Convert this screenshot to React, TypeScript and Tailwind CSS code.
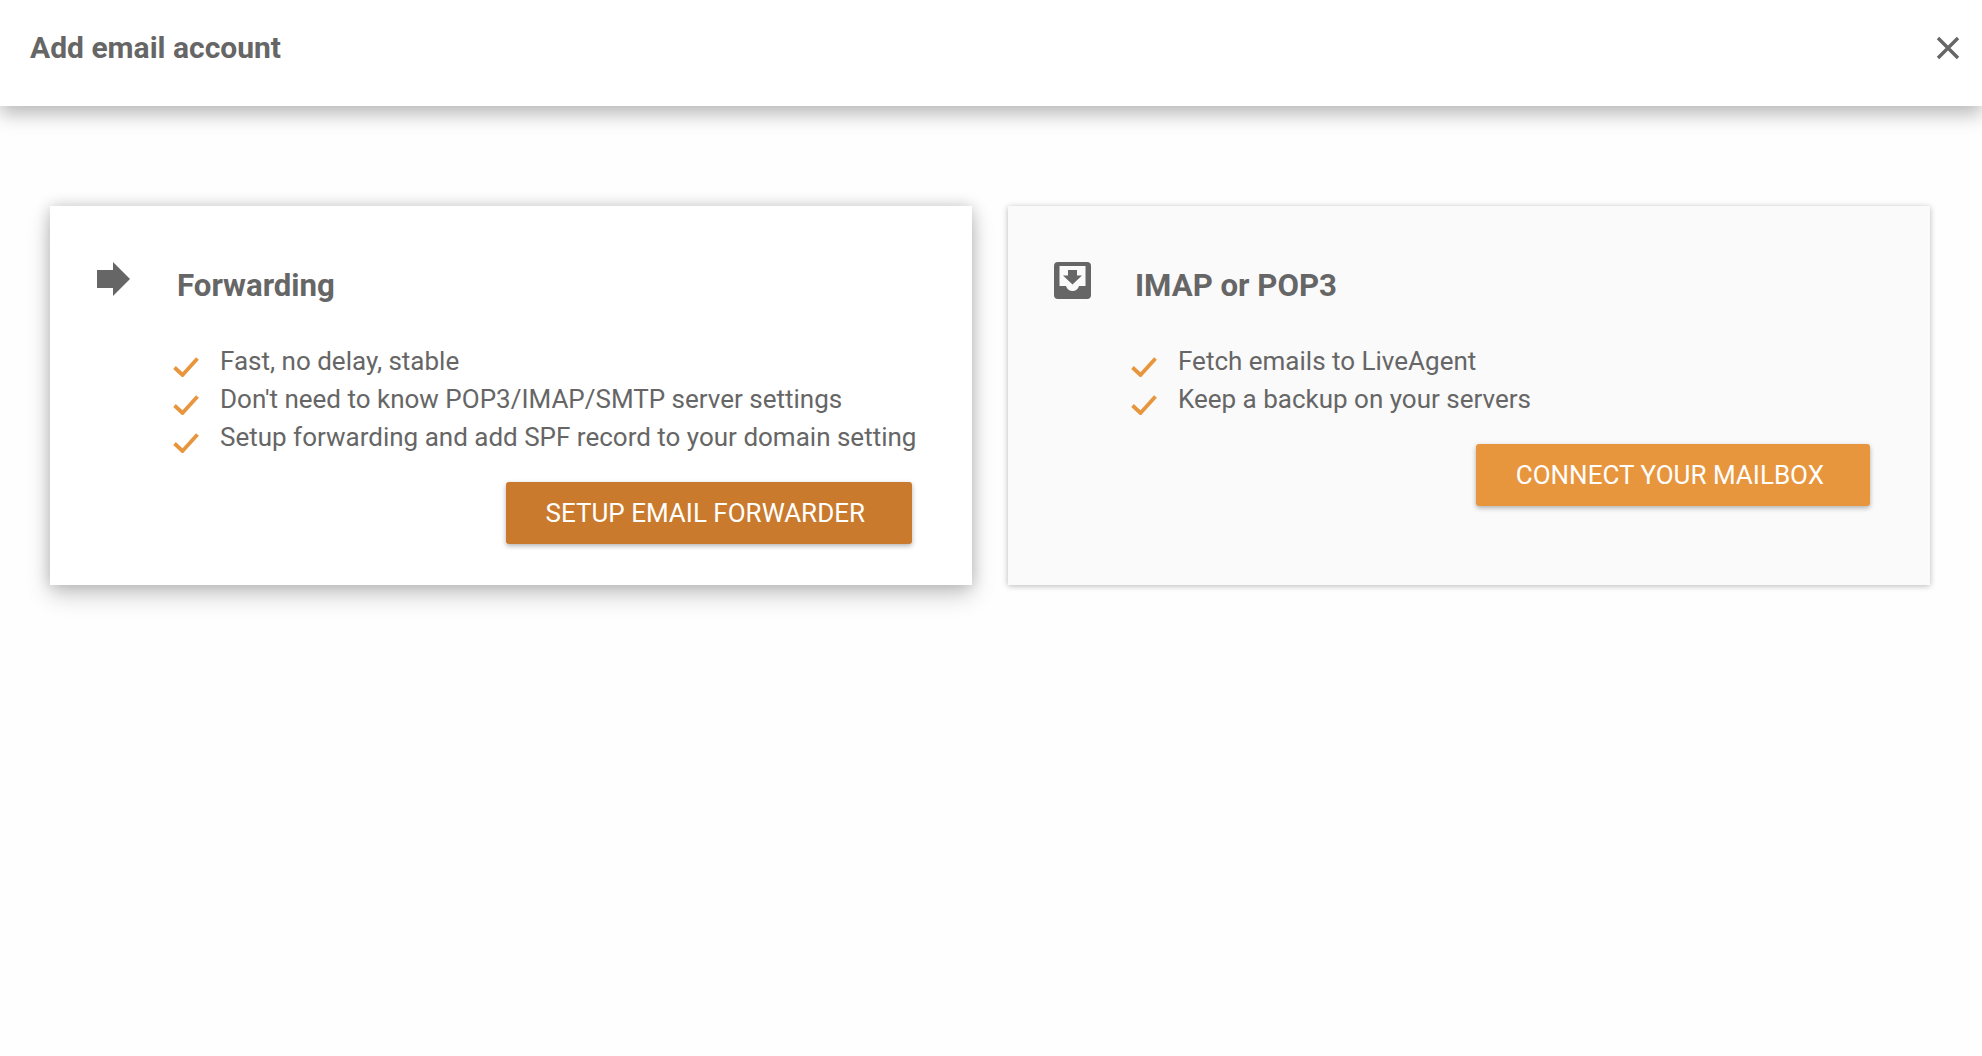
import React from 'react';

const Check = () => (
  <svg width="26" height="20" viewBox="0 0 26 20" className="mt-[15px] shrink-0 text-[#e8963e]">
    <path d="M1.5 10.5 L9.5 18 L24.5 1.5" fill="none" stroke="currentColor" strokeWidth="3.8" />
  </svg>
);

const ArrowIcon = () => (
  <svg width="33" height="34" viewBox="0 0 33 34" className="ml-[1px] text-[#666666]">
    <path d="M0 8 H16 V0 L33 17 L16 34 V26 H0 Z" fill="currentColor" />
  </svg>
);

const InboxIcon = () => (
  <svg width="37" height="37" viewBox="0 0 37 37" className="text-[#666666]">
    <path
      fillRule="evenodd"
      d="M4 0 H33 A4 4 0 0 1 37 4 V33 A4 4 0 0 1 33 37 H4 A4 4 0 0 1 0 33 V4 A4 4 0 0 1 4 0 Z M5.5 4 V24 H12 C13 27.5 15.5 29 18.5 29 C21.5 29 24 27.5 25 24 H31.5 V4 Z"
      fill="currentColor"
    />
    <path d="M14 8 H23 V13.5 H28 L18.5 22.5 L9 13.5 H14 Z" fill="currentColor" />
  </svg>
);

interface CardProps {
  title: string;
  icon: React.ReactNode;
  items: string[];
  action: string;
  active?: boolean;
}

const Card: React.FC<CardProps> = ({ title, icon, items, action, active }) => (
  <div
    className={`flex h-[379px] w-[922px] pl-[46px] pt-[56px] ${
      active
        ? 'bg-white shadow-[0_10px_22px_rgba(0,0,0,0.2),0_0_14px_rgba(0,0,0,0.18)]'
        : 'bg-[#fafafa] shadow-[0_1px_6px_rgba(0,0,0,0.28)]'
    }`}
  >
    <div className="w-[81px] shrink-0">{icon}</div>
    <div className="flex w-[745px] flex-col">
      <h2 className="mt-[6px] text-[31.2px] leading-[36px] font-bold text-[#666666]">{title}</h2>
      <ul className="mt-[38px] flex flex-col">
        {items.map((item) => (
          <li key={item} className="-ml-[4px] flex h-[38px] items-start">
            <Check />
            <span className="ml-[21px] text-[26px] leading-[38px] whitespace-nowrap text-[#666666]">{item}</span>
          </li>
        ))}
      </ul>
      <button
        className={`mt-[26px] mr-[10px] flex h-[62px] items-center self-end rounded-[3px] text-[26px] text-white shadow-[0_2px_5px_rgba(0,0,0,0.3)] ${
          active ? 'bg-[#c97a2c] pl-[39px] pr-[47px]' : 'bg-[#e8963e] pl-[40px] pr-[46px]'
        }`}
      >
        {action}
      </button>
    </div>
  </div>
);

export default function App() {
  return (
    <div className="min-h-[1056px] bg-[#fffeff] font-['Roboto',sans-serif]">
      <header className="flex h-[106px] items-start justify-between bg-white pl-[30px] pr-[22px] pt-[28px] shadow-[0_8px_18px_rgba(0,0,0,0.28)]">
        <h1 className="text-[30px] leading-[40px] font-bold text-[#666666]">Add email account</h1>
        <svg width="24" height="24" viewBox="0 0 24 24" className="mt-[8px] text-[#666666]">
          <path d="M2 2 L22 22 M22 2 L2 22" stroke="currentColor" strokeWidth="3.4" fill="none" />
        </svg>
      </header>
      <main className="flex gap-[36px] pl-[50px] pt-[100px]">
        <Card
          active
          title="Forwarding"
          icon={<ArrowIcon />}
          items={[
            'Fast, no delay, stable',
            "Don't need to know POP3/IMAP/SMTP server settings",
            'Setup forwarding and add SPF record to your domain setting',
          ]}
          action="SETUP EMAIL FORWARDER"
        />
        <Card
          title="IMAP or POP3"
          icon={<InboxIcon />}
          items={['Fetch emails to LiveAgent', 'Keep a backup on your servers']}
          action="CONNECT YOUR MAILBOX"
        />
      </main>
    </div>
  );
}
